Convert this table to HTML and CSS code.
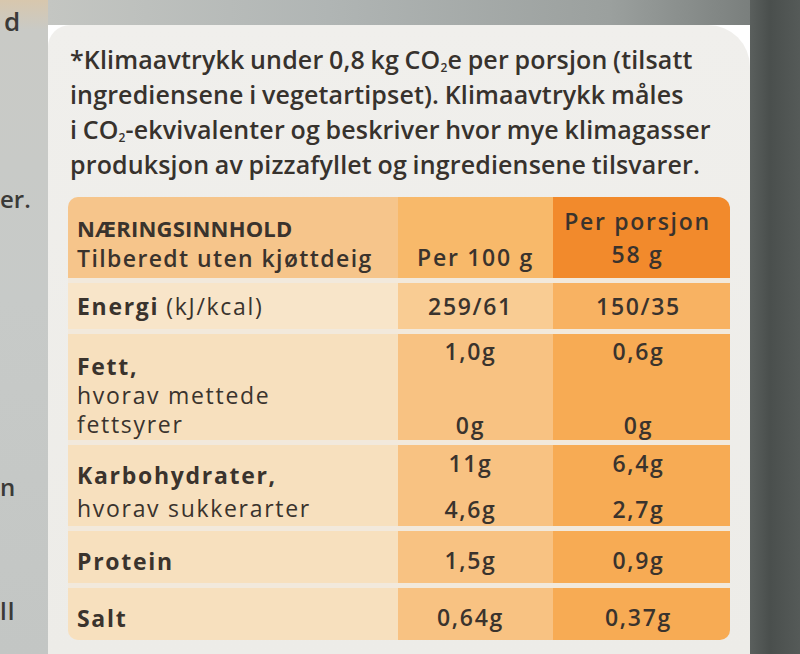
FILE: index.html
```html
<!DOCTYPE html>
<html lang="no">
<head>
<meta charset="utf-8">
<title>Næringsinnhold</title>
<link rel="stylesheet" href="styles.css">
</head>
<body>
<div class="scene">
  <div class="left-strip">
    <span class="frag frag-1">d</span>
    <span class="frag frag-2">er.</span>
    <span class="frag frag-3">n</span>
    <span class="frag frag-4">ll</span>
  </div>
  <div class="middle">
    <div class="top-strip"></div>
    <div class="card">
      <p class="note">*Klimaavtrykk under 0,8 kg CO<sub>2</sub>e per porsjon (tilsatt<br>ingrediensene i vegetartipset). Klimaavtrykk måles<br>i CO<sub>2</sub>-ekvivalenter og beskriver hvor mye klimagasser<br>produksjon av pizzafyllet og ingrediensene tilsvarer.</p>
      <div class="table">
        <div class="row row-head">
          <div class="cell c1 head-label"><b>NÆRINGSINNHOLD</b><span>Tilberedt uten kjøttdeig</span></div>
          <div class="cell c2 head-100">Per 100 g</div>
          <div class="cell c3 head-por"><span>Per porsjon</span><span>58 g</span></div>
        </div>
        <div class="row row-energy">
          <div class="cell c1 lbl"><b>Energi</b> (kJ/kcal)</div>
          <div class="cell c2 val">259/61</div>
          <div class="cell c3 val">150/35</div>
        </div>
        <div class="row row-fett">
          <div class="cell c1 lbl multi"><b>Fett,</b><span>hvorav mettede</span><span>fettsyrer</span></div>
          <div class="cell c2 val split"><span>1,0g</span><span>0g</span></div>
          <div class="cell c3 val split"><span>0,6g</span><span>0g</span></div>
        </div>
        <div class="row row-karbo">
          <div class="cell c1 lbl multi"><b>Karbohydrater,</b><span>hvorav sukkerarter</span></div>
          <div class="cell c2 val split"><span>11g</span><span>4,6g</span></div>
          <div class="cell c3 val split"><span>6,4g</span><span>2,7g</span></div>
        </div>
        <div class="row row-protein">
          <div class="cell c1 lbl"><b>Protein</b></div>
          <div class="cell c2 val">1,5g</div>
          <div class="cell c3 val">0,9g</div>
        </div>
        <div class="row row-salt">
          <div class="cell c1 lbl"><b>Salt</b></div>
          <div class="cell c2 val">0,64g</div>
          <div class="cell c3 val">0,37g</div>
        </div>
      </div>
    </div>
  </div>
  <div class="right-strip"></div>
</div>
</body>
</html>
```
FILE: styles.css
```css
* { box-sizing: border-box; }
html, body { margin: 0; padding: 0; }
body {
  width: 800px;
  height: 654px;
  overflow: hidden;
  font-family: "Open Sans", "Liberation Sans", sans-serif;
  color: #3a332d;
}
.scene {
  display: flex;
  width: 800px;
  height: 654px;
}
.left-strip {
  width: 48px;
  flex: none;
  display: flex;
  flex-direction: column;
  align-items: flex-start;
  overflow: hidden;
  background: linear-gradient(180deg, #d8c7ad 0px, #c9cac6 30px, #c7cac8 300px, #c3c6c4 654px);
}
.frag {
  display: block;
  font-family: "Open Sans", "Liberation Sans", sans-serif;
  font-weight: 600;
  font-size: 24px;
  line-height: 30px;
  color: #3b3a38;
  white-space: nowrap;
}
.frag-1 { margin-top: 6px; margin-left: 4px; font-size: 26px; }
.frag-2 { margin-top: 148px; margin-left: 0; }
.frag-3 { margin-top: 258px; margin-left: 0; }
.frag-4 { margin-top: 94px; margin-left: 0; letter-spacing: 1px; }
.middle {
  flex: none;
  width: 702px;
  display: flex;
  flex-direction: column;
}
.top-strip {
  height: 25px;
  flex: none;
  background: linear-gradient(90deg, #c4c6c2 0%, #b0b5b4 40%, #9ba09e 80%, #7a7f7d 100%);
}
.card {
  flex: 1;
  background: linear-gradient(180deg, #f0efec 0%, #edece8 100%);
  border-radius: 22px 42px 0 0;
  padding: 17px 20px 0 20px;
}
.right-strip {
  flex: 1;
  background: linear-gradient(90deg, #5a5f5d 0%, #4a4f4d 40%, #555a58 100%);
}
.note {
  margin: 0;
  padding-left: 2px;
  font-size: 25px;
  font-weight: 600;
  line-height: 35px;
  color: #37322d;
  letter-spacing: 0.15px;
  word-spacing: -1px;
  white-space: nowrap;
}
.note sub {
  font-size: 12px;
  line-height: 0;
  vertical-align: -3px;
}
.table {
  margin-top: 15px;
  display: flex;
  flex-direction: column;
  gap: 5px;
  background: #f2e9dc;
  border-radius: 10px 12px 10px 10px;
  overflow: hidden;
}
.row {
  display: grid;
  grid-template-columns: 330px 155px 1fr;
}
.cell {
  font-size: 23px;
  letter-spacing: 1.7px;
  white-space: nowrap;
}
.c1 { background: #f7e0be; padding-left: 9px; }
.c2 { background: #f8c282; }
.c3 { background: #f7ab54; }
.row-head .c1 { background: #f6c58b; }
.row-head .c2 { background: #f8b96a; }
.row-head .c3 { background: #f28a2c; }
.row-energy .c1 { background: #f8e5c9; }
.row-energy .c2 { background: #f9cc93; }
.row-energy .c3 { background: #f8b262; }
.row-head { height: 81px; }
.row-energy { height: 46px; }
.row-fett { height: 106px; }
.row-karbo { height: 81px; }
.row-protein { height: 52px; }
.row-salt { height: 52px; }
.head-label {
  display: flex;
  flex-direction: column;
  padding-top: 16px;
  line-height: 30px;
}
.head-label b { font-weight: 700; font-size: 22px; letter-spacing: 0.2px; }
.head-label span { font-weight: 600; letter-spacing: 1.4px; }
.head-100 {
  display: flex;
  align-items: flex-end;
  justify-content: center;
  padding-bottom: 6px;
  line-height: 30px;
  font-weight: 600;
}
.head-por {
  display: flex;
  flex-direction: column;
  align-items: center;
  padding-top: 8px;
  padding-right: 8px;
  line-height: 33px;
  font-weight: 600;
}
.lbl {
  display: flex;
  align-items: center;
  font-weight: 500;
  line-height: 29px;
  gap: 7px;
}
.lbl b { font-weight: 700; }
.lbl.multi {
  flex-direction: column;
  align-items: flex-start;
  gap: 0;
}
.row-fett .lbl.multi { padding-top: 18px; }
.row-karbo .lbl.multi { padding-top: 14px; line-height: 33px; }
.row-protein .lbl, .row-salt .lbl { padding-top: 8px; }
.val {
  display: flex;
  align-items: center;
  justify-content: center;
  font-weight: 600;
  line-height: 29px;
}
.c2.val { padding-right: 10px; }
.c3.val { padding-right: 6px; }
.row-protein .val, .row-salt .val { padding-top: 6px; }
.val.split {
  flex-direction: column;
  justify-content: space-between;
  align-items: center;
}
.row-fett .val.split { padding-top: 3px; }
.row-karbo .val.split { padding-top: 2px; line-height: 33px; }
```
